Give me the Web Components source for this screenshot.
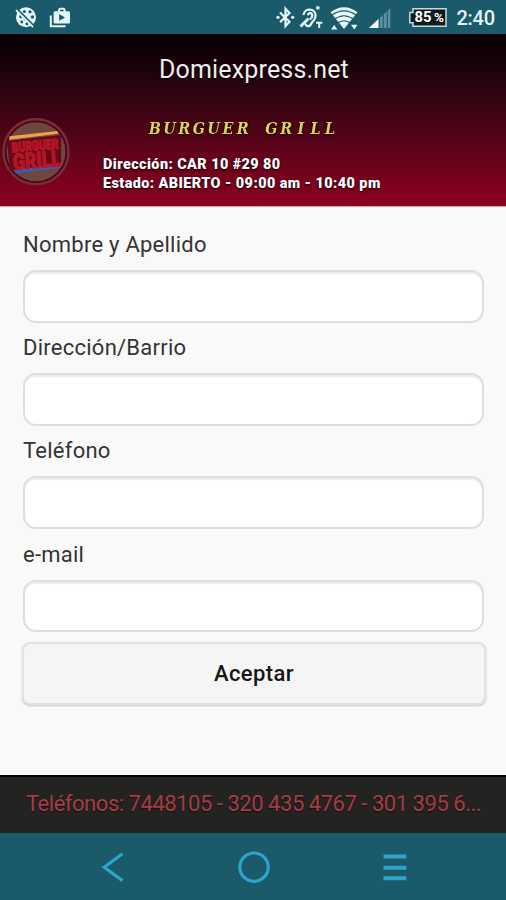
<!DOCTYPE html>
<html lang="es"><head><meta charset="utf-8"><title>Domiexpress.net</title>
<style>html,body{margin:0;height:100%;overflow:hidden;background:#f9f9f9}</style></head>
<body><domi-app></domi-app>
<script>
const define=(name,html)=>customElements.define(name,class extends HTMLElement{
  constructor(){super();this.attachShadow({mode:'open'}).innerHTML=html}
});

define('status-bar',`<style>
:host{display:block;height:34px;background:#1b5a6b;color:#eefafa}
.row{display:flex;justify-content:space-between;height:34px}
svg{display:block;height:34px}
</style><div class="row">
<svg width="90" viewBox="0 0 90 34">
 <circle cx="26" cy="17.3" r="10" fill="#e3f8f8"/>
 <g fill="#1b5a6b"><circle cx="21" cy="16.5" r="1.8"/><circle cx="24.3" cy="11.5" r="1.5"/><circle cx="30" cy="11.8" r="1.6"/><circle cx="32.4" cy="17" r="1.8"/><circle cx="25.3" cy="18.7" r="1.8"/><circle cx="21.7" cy="22" r="1.4"/><circle cx="27" cy="23.8" r="1.5"/></g>
 <path d="M17.5 9.5 34 26" stroke="#1b5a6b" stroke-width="2"/><path d="M16 10.2 33 27" stroke="#e3f8f8" stroke-width="1.8"/>
 <path d="M50.8 15.5V26.2H65.5" fill="none" stroke="#e3f8f8" stroke-width="2"/>
 <path d="M59 12V10.2Q59 8.8 60.4 8.8H63.2Q64.6 8.8 64.6 10.2V12" fill="none" stroke="#e3f8f8" stroke-width="1.9"/>
 <path fill-rule="evenodd" d="M55 11.3H68.6Q70 11.3 70 12.7V22.3Q70 23.6 68.6 23.6H55Q53.6 23.6 53.6 22.3V12.7Q53.6 11.3 55 11.3ZM59.2 14V20.8L65 17.4Z" fill="#e3f8f8"/>
</svg>
<svg width="236" viewBox="270 0 236 34">
 <g fill="none" stroke="#e3f8f8" stroke-width="2.2">
 <path d="M280 12.5 289.5 21.7 285.5 26V8.7L289.5 13 280 22.2"/>
 <path d="M303.5 15C304.2 7.5 315.6 8 315.6 15.5C315.6 20.5 312.6 20.5 311.3 23.5C310 27 306 27 305.5 23.6M308 15.2C308.5 12.2 312.3 12.4 312.3 15.6C312.3 18 310.5 18.3 309.7 19.7"/>
 <path d="M300.5 26.5 308.5 18.5" stroke-width="2.8"/></g>
 <g fill="#e3f8f8"><circle cx="317.8" cy="7.8" r="1.9"/><circle cx="278" cy="17.3" r="1.6"/><circle cx="292.7" cy="17.3" r="1.6"/><path d="M316 21.8h6.3v2h-2.1V28h-2v-4.2H316Z"/></g>
 <path d="M330.5 12.2Q344 2.5 357.5 12.2L344 29Z" fill="#e3f8f8"/>
 <g fill="none" stroke="#1b5a6b" stroke-width="1.1"><path d="M331.5 15.3Q344 6.5 356.5 15.3M334 19.4Q344 12 354 19.4M337 23.5Q344 18 351 23.5"/></g>
 <path d="M331 29.4 334.2 25 337.4 29.4ZM351 24.8h6.5l-3.2 4.6Z" fill="#e3f8f8"/>
 <path d="M369 28 390.3 8V28Z" fill="#5d909c"/><path d="M369 28 378.5 19V28Z" fill="#f1fbfb"/>
 <path d="M379.3 17V28M383.3 13V28M387.3 9V28" stroke="#1b5a6b" stroke-width="1"/>
 <path d="M413 8.7H446V26.3H413V22.8H409.8V12.5H413Z" fill="#101a1d" stroke="#c8dadd" stroke-width="1.5"/>
 <g fill="#fff" font-family="Roboto,sans-serif" font-weight="700"><text x="414.5" y="22.3" font-size="14" textLength="17" lengthAdjust="spacingAndGlyphs">85</text><text x="434" y="21.8" font-size="12" textLength="10" lengthAdjust="spacingAndGlyphs">%</text></g>
 <text x="456.5" y="24.8" fill="#e3f4f5" font-family="Roboto,sans-serif" font-size="20" font-weight="500" textLength="38.5">2:40</text>
</svg></div>`);

define('restaurant-logo',`<style>:host{display:block;width:72px;height:72px}svg{display:block}</style>
<svg width="72" height="72" viewBox="0 115 72 72">
 <defs><pattern id="dots" width="3" height="3" patternUnits="userSpaceOnUse"><rect width="3" height="3" fill="#643d37"/><path d="M0 0h1.3v1.3H0zM1.6 1.6h1.2v1.2H1.6z" fill="#80594a"/></pattern></defs>
 <circle cx="36" cy="151.7" r="32.5" fill="#530216" stroke="#713139" stroke-width="2.4"/>
 <circle cx="36" cy="151.7" r="29.5" fill="url(#dots)"/>
 <path d="M7 141 61 135V164L10 171Z" fill="#68081d"/>
 <path d="M9.5 136.3 57.5 131.1 58 133.8 9.2 139.7Z" fill="#f0a34c"/>
 <path d="M14 169.8 61.5 164.1 60.5 167.8 15.8 173.8Z" fill="#395bad"/>
 <g transform="rotate(-5 36 152)" font-family="Roboto,sans-serif" font-weight="900" fill="#b51524" stroke="#b51524" stroke-width=".8"><text transform="translate(12 150.3) scale(1 1.45)" font-size="9.5" textLength="47" lengthAdjust="spacingAndGlyphs">BURGUER</text><text transform="translate(12 168) scale(1 1.4)" font-size="16" textLength="48" lengthAdjust="spacingAndGlyphs">GRILL</text></g>
</svg>`);

define('restaurant-header',`<style>
:host{display:block;height:172px;background:linear-gradient(#060001,#1b030a 20%,#3d0414 45%,#63031a 70%,#8d0021);border-bottom:1px solid #d3a2ae;font-family:Roboto,sans-serif;color:#eee}
.title{height:70px;line-height:72px;text-align:center;font-size:25px;text-indent:2px;letter-spacing:.16px;text-shadow:0 1px 1px #000}
.body{display:grid;grid-template-columns:103px 1fr}
restaurant-logo{margin-top:11px}
.name{height:52px}
.name svg{display:block;filter:drop-shadow(0 1px 1px #000)}
.line{height:18.7px;line-height:18.7px;font-weight:900;font-size:14.4px;letter-spacing:.43px;color:#fff;text-shadow:0 1px 2px #000;white-space:nowrap}
</style><div class="title"><slot name="title"></slot></div><div class="body"><restaurant-logo></restaurant-logo><div><div class="name"><svg width="260" height="51"><text text-anchor="middle" x="51.8 66.5 81.2 95.8 110.5 125.1 139.8 154.4 168.5 183.2 197.8 212.5 227.1" y="29.7" font-family="DejaVu Serif Condensed,DejaVu Serif,serif" font-style="italic" font-weight="700" font-size="16" fill="#d9d454">BURGUER GRILL</text></svg></div><div class="line"><slot name="address"></slot></div><div class="line"><slot name="status"></slot></div></div></div>`);

define('form-field',`<style>
:host{display:block;height:103.2px;font:22px/32px Roboto,sans-serif;color:#343434}
label{display:block;height:41px;letter-spacing:.25px}
input{display:block;box-sizing:border-box;width:100%;height:52.5px;border:2px solid #dedede;border-radius:13px;background:#fff;padding:0 12px;outline:0;box-shadow:inset 0 2px 1px #eee;font:inherit}
</style><label for="i"><slot></slot></label><input id="i">`);

define('action-button',`<style>
:host{display:block}
button{display:block;box-sizing:border-box;width:464px;height:63px;margin-left:-1px;border:2px solid #e2e2e2;border-radius:8px;background:#f5f5f5;box-shadow:0 1px 2px #c4c4c4;font:500 22px/59px Roboto,sans-serif;letter-spacing:.4px;color:#171717;padding:0}
</style><button><slot></slot></button>`);

define('phone-footer',`<style>
:host{display:block;box-sizing:border-box;height:58px;border-top:2px solid #050505;background:#232422;padding:0 24px 0 26px;font:22px/54px Roboto,sans-serif;color:#a63c44;text-shadow:0 1px 1px #111}
div{white-space:nowrap;letter-spacing:-.47px}
</style><div><slot></slot></div>`);

define('nav-bar',`<style>:host{display:block;height:67px;background:#1b5a6b}svg{display:block}</style>
<svg width="506" height="67" viewBox="0 833 506 67" fill="none" stroke="#2ca5c9">
<path d="M122.5 853.8 104.2 867.2 122.5 880.6" stroke-width="3.2"/><circle cx="254" cy="867.2" r="14.2" stroke-width="3.2"/><path d="M383.5 856.5H406.3M383.5 867.7H406.3M383.5 878.2H406.3" stroke-width="4"/></svg>`);

define('domi-app',`<style>
:host{display:flex;flex-direction:column;width:506px;height:900px;background:#f9f9f9;overflow:hidden}
main{flex:1;min-height:0;box-sizing:border-box;padding:22px 22px 0 23px}
</style>
<status-bar></status-bar>
<restaurant-header><span slot="title">Domiexpress.net</span><span slot="address">Dirección: CAR 10 #29 80</span><span slot="status">Estado: ABIERTO - 09:00 am - 10:40 pm</span></restaurant-header>
<main><form-field>Nombre y Apellido</form-field><form-field>Dirección/Barrio</form-field><form-field>Teléfono</form-field><form-field>e-mail</form-field><action-button>Aceptar</action-button></main>
<phone-footer>Teléfonos: 7448105 - 320 435 4767 - 301 395 6...</phone-footer>
<nav-bar></nav-bar>`);
</script></body></html>
